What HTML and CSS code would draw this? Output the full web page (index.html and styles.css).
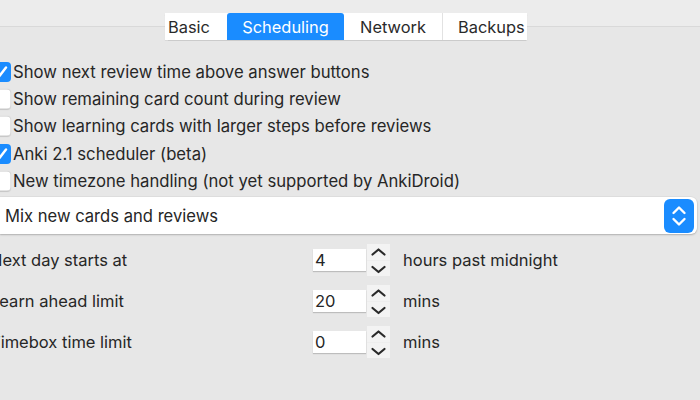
FILE: index.html
```html
<!DOCTYPE html>
<html>
<head>
<meta charset="utf-8">
<link rel="stylesheet" href="styles.css">
</head>
<body>
<div class="page">
  <header class="topbar">
    <nav class="tabs">
      <span class="tab tab-basic">Basic</span>
      <span class="tab tab-sched active">Scheduling</span>
      <span class="tab tab-net">Network</span>
      <span class="tab tab-back">Backups</span>
    </nav>
  </header>
  <main class="content">
    <ul class="checks">
      <li class="check"><span class="box checked"><svg viewBox="0 0 20 20" width="20" height="20"><path d="M5 10.5l3.5 3.5L15 5.5" fill="none" stroke="#fff" stroke-width="2.4" stroke-linecap="round" stroke-linejoin="round"/></svg></span><span class="check-text">Show next review time above answer buttons</span></li>
      <li class="check"><span class="box"></span><span class="check-text">Show remaining card count during review</span></li>
      <li class="check"><span class="box"></span><span class="check-text">Show learning cards with larger steps before reviews</span></li>
      <li class="check"><span class="box checked"><svg viewBox="0 0 20 20" width="20" height="20"><path d="M5 10.5l3.5 3.5L15 5.5" fill="none" stroke="#fff" stroke-width="2.4" stroke-linecap="round" stroke-linejoin="round"/></svg></span><span class="check-text">Anki 2.1 scheduler (beta)</span></li>
      <li class="check"><span class="box"></span><span class="check-text">New timezone handling (not yet supported by AnkiDroid)</span></li>
    </ul>
    <div class="combo">
      <span class="combo-text">Mix new cards and reviews</span>
      <span class="combo-btn"><svg viewBox="0 0 30 34" width="30" height="34"><path d="M9.5 14l5.5-5.5 5.5 5.5M9.5 20l5.5 5.5 5.5-5.5" fill="none" stroke="#fff" stroke-width="2.4" stroke-linecap="round" stroke-linejoin="round"/></svg></span>
    </div>
    <div class="spins">
      <div class="spin-row">
        <span class="spin-label">Next day starts at</span>
        <span class="spin-input">4</span>
        <span class="spin-arrows"><svg viewBox="0 0 23 32" width="23" height="32"><path d="M5.5 10.5l6-5 6 5M5.5 23l6 5 6-5" fill="none" stroke="#2a2a2a" stroke-width="2.2" stroke-linecap="round" stroke-linejoin="round"/></svg></span>
        <span class="suffix">hours past midnight</span>
      </div>
      <div class="spin-row">
        <span class="spin-label">Learn ahead limit</span>
        <span class="spin-input">20</span>
        <span class="spin-arrows"><svg viewBox="0 0 23 32" width="23" height="32"><path d="M5.5 10.5l6-5 6 5M5.5 23l6 5 6-5" fill="none" stroke="#2a2a2a" stroke-width="2.2" stroke-linecap="round" stroke-linejoin="round"/></svg></span>
        <span class="suffix">mins</span>
      </div>
      <div class="spin-row">
        <span class="spin-label">Timebox time limit</span>
        <span class="spin-input">0</span>
        <span class="spin-arrows"><svg viewBox="0 0 23 32" width="23" height="32"><path d="M5.5 10.5l6-5 6 5M5.5 23l6 5 6-5" fill="none" stroke="#2a2a2a" stroke-width="2.2" stroke-linecap="round" stroke-linejoin="round"/></svg></span>
        <span class="suffix">mins</span>
      </div>
    </div>
  </main>
</div>
</body>
</html>
```

FILE: styles.css
```css
* { box-sizing: border-box; }
html, body {
  margin: 0;
  padding: 0;
}
body {
  background: #e7e7e7;
  font-family: Inter, "Noto Sans", "Liberation Sans", sans-serif;
  color: #262626;
  font-size: 16.5px;
}
.page {
  width: 700px;
  height: 400px;
  overflow: hidden;
}
.topbar {
  height: 27px;
  background: #ececec;
  border-bottom: 1px solid #d9d9d9;
  padding-top: 13px;
  padding-left: 165px;
}
.tabs {
  display: flex;
  height: 27px;
  background: #fff;
  width: 362px;
  box-shadow: 0 0.5px 1px rgba(0,0,0,0.12);
}
.tab {
  display: flex;
  align-items: center;
  height: 27px;
  font-size: 16.4px;
  color: #2a2a2a;
  white-space: nowrap;
  overflow: hidden;
}
.tab-basic { width: 62px; padding-left: 3px; }
.tab-sched { width: 117px; justify-content: center; }
.tab-net { width: 99px; justify-content: center; border-right: 1px solid #e2e2e2; }
.tab-back { width: 84px; padding-left: 15px; }
.active {
  background: #1a8cff;
  color: #fff;
  border-radius: 3px 3px 0 0;
}
.content {
  padding-top: 31px;
}
.checks {
  list-style: none;
  margin: 0;
  padding: 0;
}
.check {
  display: flex;
  align-items: center;
  height: 27.3px;
  font-size: 16.7px;
}
.box {
  width: 20px;
  height: 20px;
  margin-left: -9px;
  margin-right: 2px;
  border-radius: 4px;
  background: #fff;
  box-shadow: inset 0 0 0 0.5px #c9c9c9, 0 0.5px 1px rgba(0,0,0,0.15);
  flex: none;
  display: flex;
}
.box.checked {
  background: #1a8cff;
  box-shadow: none;
}
.box svg { display: block; }
.combo {
  margin: 3px 3px 0 0;
  height: 37px;
  background: #fff;
  border-radius: 0 6px 6px 0;
  box-shadow: 0 1px 2px rgba(0,0,0,0.22), 0 0 0 0.5px rgba(0,0,0,0.06);
  display: flex;
  align-items: center;
  justify-content: space-between;
  padding: 0 3px 0 5px;
  font-size: 16.6px;
}
.combo-btn {
  width: 30px;
  height: 34px;
  border-radius: 6px;
  background: #1a8cff;
  display: flex;
}
.spins {
  margin-top: 5px;
}
.spin-row {
  display: grid;
  grid-template-columns: 323px 53px 24px auto;
  align-items: center;
  height: 41px;
  margin-left: -10px;
}
.spin-input {
  height: 22px;
  background: #fff;
  box-shadow: 0 1px 1px rgba(0,0,0,0.18);
  padding-left: 2px;
  line-height: 22px;
}
.spin-arrows {
  display: flex;
  margin-left: 1px;
  height: 32px;
  background: linear-gradient(#f3f3f3, #f3f3f3 49%, #dcdcdc 50%, #f3f3f3 52%);
}
.spin-arrows svg { display: block; }
.suffix {
  padding-left: 13px;
}
```
